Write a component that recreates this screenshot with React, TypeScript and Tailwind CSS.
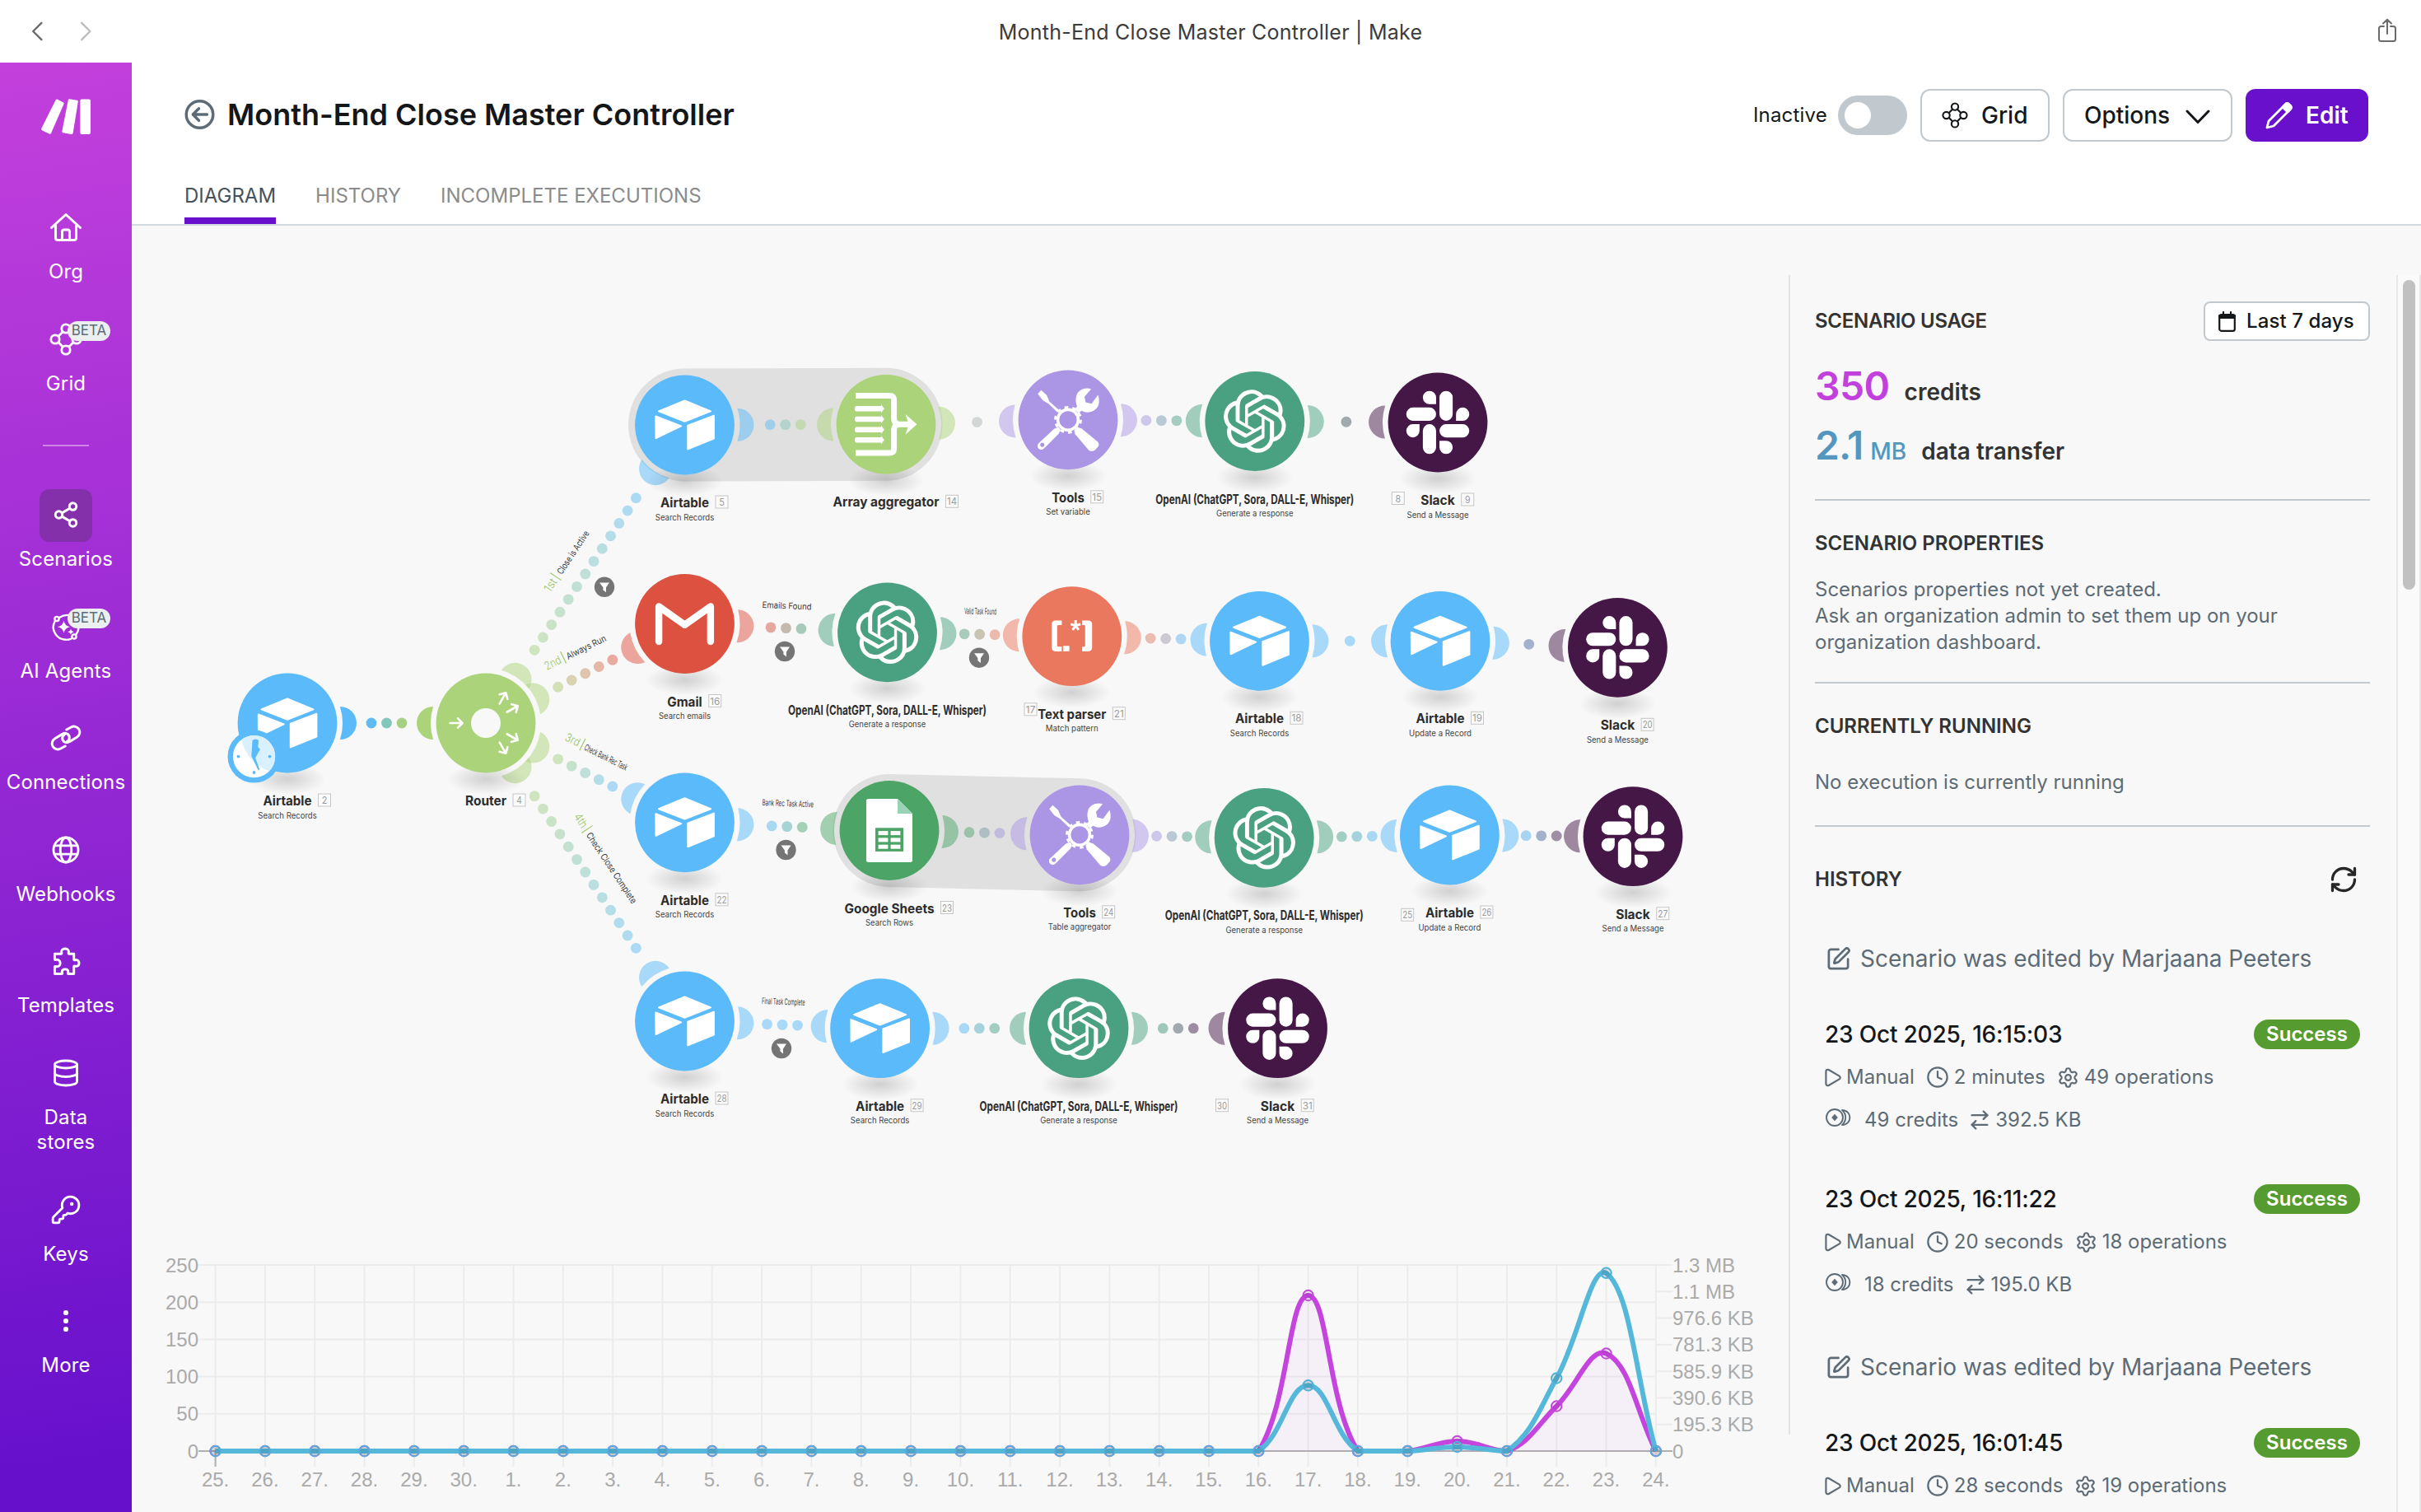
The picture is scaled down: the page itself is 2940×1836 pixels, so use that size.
import type { ReactNode } from "react";
import { ArrowRightLeft, Clock, Database, KeyRound, Play, RefreshCw, Settings, Share2, SquarePen } from "lucide-react";

/* ---------- Flow diagram ---------- */

type RGB = [number, number, number];
const BLUE: RGB = [90, 186, 250];
const GREEN: RGB = [171, 211, 122];
const RED: RGB = [221, 81, 64];
const TEAL: RGB = [74, 161, 129];
const CORAL: RGB = [234, 120, 94];
const VIOLET: RGB = [170, 150, 229];
const PLUM: RGB = [68, 23, 70];
const SHEET: RGB = [76, 165, 103];

const rgb = (c: RGB) => `rgb(${c[0]},${c[1]},${c[2]})`;
const mix = (a: RGB, b: RGB, t: number): RGB => [
  Math.round(a[0] + (b[0] - a[0]) * t),
  Math.round(a[1] + (b[1] - a[1]) * t),
  Math.round(a[2] + (b[2] - a[2]) * t),
];

const OPENAI =
  "M22.2819 9.8211a5.9847 5.9847 0 0 0-.5157-4.9108 6.0462 6.0462 0 0 0-6.5098-2.9A6.0651 6.0651 0 0 0 4.9807 4.1818a5.9847 5.9847 0 0 0-3.9977 2.9 6.0462 6.0462 0 0 0 .7427 7.0966 5.98 5.98 0 0 0 .511 4.9107 6.051 6.051 0 0 0 6.5146 2.9001A5.9847 5.9847 0 0 0 13.2599 24a6.0557 6.0557 0 0 0 5.7718-4.2058 5.9894 5.9894 0 0 0 3.9977-2.9001 6.0557 6.0557 0 0 0-.7475-7.0729zm-9.022 12.6081a4.4755 4.4755 0 0 1-2.8764-1.0408l.1419-.0804 4.7783-2.7582a.7948.7948 0 0 0 .3927-.6813v-6.7369l2.02 1.1686a.071.071 0 0 1 .038.052v5.5826a4.504 4.504 0 0 1-4.4945 4.4944zm-9.6607-4.1254a4.4708 4.4708 0 0 1-.5346-3.0137l.142.0852 4.783 2.7582a.7712.7712 0 0 0 .7806 0l5.8428-3.3685v2.3324a.0804.0804 0 0 1-.0332.0615L9.74 19.9502a4.4992 4.4992 0 0 1-6.1408-1.6464zM2.3408 7.8956a4.485 4.485 0 0 1 2.3655-1.9728V11.6a.7664.7664 0 0 0 .3879.6765l5.8144 3.3543-2.0201 1.1685a.0757.0757 0 0 1-.071 0l-4.8303-2.7865A4.504 4.504 0 0 1 2.3408 7.872zm16.5963 3.8558L13.1038 8.364 15.1192 7.2a.0757.0757 0 0 1 .071 0l4.8303 2.7913a4.4944 4.4944 0 0 1-.6765 8.1042v-5.6772a.79.79 0 0 0-.407-.667zm2.0107-3.0231l-.142-.0852-4.7735-2.7818a.7759.7759 0 0 0-.7854 0L9.409 9.2297V6.8974a.0662.0662 0 0 1 .0284-.0615l4.8303-2.7866a4.4992 4.4992 0 0 1 6.6802 4.66zM8.3065 12.863l-2.02-1.1638a.0804.0804 0 0 1-.038-.0567V6.0742a4.4992 4.4992 0 0 1 7.3757-3.4537l-.142.0805L8.704 5.459a.7948.7948 0 0 0-.3927.6813zm1.0976-2.3654l2.602-1.4998 2.6069 1.4998v2.9994l-2.5974 1.4997-2.6067-1.4997Z";
const SLACK =
  "M5.042 15.165a2.528 2.528 0 0 1-2.52 2.523A2.528 2.528 0 0 1 0 15.165a2.527 2.527 0 0 1 2.522-2.52h2.52v2.52zM6.313 15.165a2.527 2.527 0 0 1 2.521-2.52 2.527 2.527 0 0 1 2.521 2.52v6.313A2.528 2.528 0 0 1 8.834 24a2.528 2.528 0 0 1-2.521-2.522v-6.313zM8.834 5.042a2.528 2.528 0 0 1-2.521-2.52A2.528 2.528 0 0 1 8.834 0a2.528 2.528 0 0 1 2.521 2.522v2.52H8.834zM8.834 6.313a2.528 2.528 0 0 1 2.521 2.521 2.528 2.528 0 0 1-2.521 2.521H2.522A2.528 2.528 0 0 1 0 8.834a2.528 2.528 0 0 1 2.522-2.521h6.312zM18.956 8.834a2.528 2.528 0 0 1 2.522-2.521A2.528 2.528 0 0 1 24 8.834a2.528 2.528 0 0 1-2.522 2.521h-2.522V8.834zM17.688 8.834a2.528 2.528 0 0 1-2.523 2.521 2.527 2.527 0 0 1-2.52-2.521V2.522A2.527 2.527 0 0 1 15.165 0a2.528 2.528 0 0 1 2.523 2.522v6.312zM15.165 18.956a2.528 2.528 0 0 1 2.523 2.522A2.528 2.528 0 0 1 15.165 24a2.527 2.527 0 0 1-2.52-2.522v-2.522h2.52zM15.165 17.688a2.527 2.527 0 0 1-2.52-2.523 2.526 2.526 0 0 1 2.52-2.52h6.313A2.527 2.527 0 0 1 24 15.165a2.528 2.528 0 0 1-2.522 2.523h-6.313z";

function AirtableMark() {
  return (
    <path
      fill="#fff"
      stroke="#fff"
      strokeWidth="2"
      strokeLinejoin="round"
      d="M0 -29.5L31.5 -16.6L0 -4.2L-31.5 -16.6ZM35.4 -11.2V16.6L3.8 29.4V.8ZM-35.2 -10.6L-4.4 1.4L-35 16Z"
    />
  );
}

function GmailMark() {
  return (
    <path fill="none" stroke="#fff" strokeWidth="8.4" strokeLinecap="round" strokeLinejoin="round" d="M-31.4 21.5V-21L0 1.2L31.4 -21V21.5" />
  );
}

function ToolsMark() {
  return (
    <g fill="#fff" stroke="none">
      <path d="M-36.8 -31.5L-32.6 -36L-26 -30L-22.5 -22L-10.6 -11.5L-13 -9.2L-24 -19.8L-30.5 -23.5Z" />
      <path d="M8 -12.5L12.5 -8L16.4 -11C24 -7 34 -9.6 37 -18C38.4 -22.4 37.6 -27 36.4 -30.2L28.6 -19.6L21.4 -21.4L20 -28L28 -37.2C22 -40 12.6 -37 10.2 -29.4C8.8 -24.6 9.4 -20 11 -16.6Z" />
      <path fillRule="evenodd" d="M-11.5 8.6L-17 11L-35.6 28.4C-37.8 30.6 -37.4 33.6 -35.4 35.2C-33.4 36.8 -30.6 36.4 -28.8 34.4L-11.2 16.6L-9 12ZM-31.2 27.8A2.6 2.6 0 1 1 -31.3 27.8Z" />
      <path d="M7.4 12.6L8.6 17.4L24.8 36.4C27 38.8 30.6 38.6 33 36.4L36.2 33C38 31 37.8 28.4 35.8 26.4L16.4 10.4L11.4 9.2Z" />
      <circle r="12.4" fill="none" stroke="#fff" strokeWidth="3.6" />
      <circle r="15.4" fill="none" stroke="#fff" strokeWidth="3" strokeDasharray="4.6 5.08" />
    </g>
  );
}

function AggregatorMark() {
  return (
    <g fill="#fff">
      <path
        fill="none"
        stroke="#fff"
        strokeWidth="7"
        d="M-37 -34.8H4C8 -34.8 9.6 -33 9.6 -29.5V-8C9.6 -2 12 0 17 0H29M-37 34.8H4C8 34.8 9.6 33 9.6 29.5V8C9.6 2 12 0 17 0"
      />
      <path d="M23.6 -12.4L37.4 0L23.6 12.4L27.6 0Z" />
      {[-19, -6.3, 6.4, 19].map((y) => (
        <path key={y} d={`M-36.6 ${y - 3.3}H-6V${y - 5}L-2 ${y}L-6 ${y + 5}V${y + 3.3}H-36.6L-38 ${y + 1.5}V${y - 1.5}Z`} />
      ))}
    </g>
  );
}

function ParserMark() {
  return (
    <g fill="#fff">
      <path d="M-12.4 -19.3V-13.8H-16.6Q-18 -13.8 -18 -12.4V11.2Q-18 12.6 -16.6 12.6H-12.4V18.2H-20Q-24.6 18.2 -24.6 13.6V-14.8Q-24.6 -19.3 -20 -19.3Z" />
      <path d="M12.4 -19.3V-13.8H14.6Q16 -13.8 16 -12.4V11.2Q16 12.6 14.6 12.6H12.4V18.2H19.6Q24.4 18.2 24.4 13.6V-14.8Q24.4 -19.3 19.6 -19.3Z" />
      <rect x="-10.8" y="11.6" width="7.6" height="6.6" />
      <path stroke="#fff" strokeWidth="3" d="M4.4 -13V-19.6M4.4 -13L-1.6 -14.8M4.4 -13L10.4 -14.8M4.4 -13L.8 -7.8M4.4 -13L8 -7.8" />
    </g>
  );
}

function SheetsMark() {
  return (
    <g>
      <path fill="#fff" d="M-25.5 -38.5H10L28 -20.5V36Q28 38.5 25.5 38.5H-25.5Q-28 38.5 -28 36V-36Q-28 -38.5 -25.5 -38.5Z" />
      <path fill="#98d3b5" d="M10 -38.5L28 -20.5H10Z" />
      <rect x="-17" y="-3.2" width="34" height="28.6" fill="#4ca567" />
      {[0.6, 8.9, 17.2].map((y) => (
        <g key={y} fill="#fff">
          <rect x="-13.4" y={y} width="11.8" height="5" />
          <rect x="1.6" y={y} width="11.8" height="5" />
        </g>
      ))}
    </g>
  );
}

function RouterMark() {
  const arrows: [number, number, number][] = [
    [-36, 0, 0],
    [20.5, -30.2, -60],
    [32.2, -17, -30],
    [32.2, 17, 30],
    [20.5, 30.2, 60],
  ];
  return (
    <g>
      <circle r="18" fill="#f8f8f8" />
      {arrows.map(([x, y, a]) => (
        <path
          key={`${x}${y}`}
          transform={`translate(${x} ${y}) rotate(${a})`}
          fill="none"
          stroke="#fff"
          strokeWidth="2.6"
          strokeLinecap="round"
          strokeLinejoin="round"
          d="M-7.5 0H7.5M2 -5.6L7.6 0L2 5.6"
        />
      ))}
    </g>
  );
}

const logo = (d: string, size: number) => (
  <path fill="#fff" transform={`scale(${size / 24}) translate(-12 -12)`} d={d} />
);

type Kind = "airtable" | "router" | "array" | "tools" | "openai" | "slack" | "gmail" | "parser" | "sheets";

const KINDS: Record<Kind, { color: RGB; name: string; width: number; mark: ReactNode }> = {
  airtable: { color: BLUE, name: "Airtable", width: 59, mark: <AirtableMark /> },
  router: { color: GREEN, name: "Router", width: 50, mark: <RouterMark /> },
  array: { color: GREEN, name: "Array aggregator", width: 129, mark: <AggregatorMark /> },
  tools: { color: VIOLET, name: "Tools", width: 39.5, mark: <ToolsMark /> },
  openai: { color: TEAL, name: "OpenAI (ChatGPT, Sora, DALL-E, Whisper)", width: 241, mark: logo(OPENAI, 76.5) },
  slack: { color: PLUM, name: "Slack", width: 41.5, mark: logo(SLACK, 76.5) },
  gmail: { color: RED, name: "Gmail", width: 42.5, mark: <GmailMark /> },
  parser: { color: CORAL, name: "Text parser", width: 83, mark: <ParserMark /> },
  sheets: { color: SHEET, name: "Google Sheets", width: 109, mark: <SheetsMark /> },
};

type FlowNode = { id: number; kind: Kind; x: number; y: number; sub?: string; subWidth?: number };

const NODES: FlowNode[] = [
  { id: 2, kind: "airtable", x: 349, y: 878, sub: "Search Records", subWidth: 71.5 },
  { id: 4, kind: "router", x: 590, y: 878 },
  { id: 5, kind: "airtable", x: 831.5, y: 516, sub: "Search Records", subWidth: 71.5 },
  { id: 14, kind: "array", x: 1076, y: 515.3 },
  { id: 15, kind: "tools", x: 1297, y: 509.8, sub: "Set variable", subWidth: 53.5 },
  { id: 8, kind: "openai", x: 1523.8, y: 511.5, sub: "Generate a response", subWidth: 93.5 },
  { id: 9, kind: "slack", x: 1746, y: 513, sub: "Send a Message", subWidth: 75 },
  { id: 16, kind: "gmail", x: 831.5, y: 757.5, sub: "Search emails", subWidth: 63 },
  { id: 17, kind: "openai", x: 1077.5, y: 767.8, sub: "Generate a response", subWidth: 93.5 },
  { id: 21, kind: "parser", x: 1301.8, y: 772.7, sub: "Match pattern", subWidth: 64 },
  { id: 18, kind: "airtable", x: 1529.5, y: 778.3, sub: "Search Records", subWidth: 71.5 },
  { id: 19, kind: "airtable", x: 1749, y: 778.3, sub: "Update a Record", subWidth: 76 },
  { id: 20, kind: "slack", x: 1964.4, y: 786.3, sub: "Send a Message", subWidth: 75 },
  { id: 22, kind: "airtable", x: 831.5, y: 998.8, sub: "Search Records", subWidth: 71.5 },
  { id: 23, kind: "sheets", x: 1080, y: 1008.5, sub: "Search Rows", subWidth: 58 },
  { id: 24, kind: "tools", x: 1311, y: 1013.8, sub: "Table aggregator", subWidth: 76.5 },
  { id: 25, kind: "openai", x: 1535.2, y: 1017.3, sub: "Generate a response", subWidth: 93.5 },
  { id: 26, kind: "airtable", x: 1760.4, y: 1014, sub: "Update a Record", subWidth: 76 },
  { id: 27, kind: "slack", x: 1983, y: 1015.7, sub: "Send a Message", subWidth: 75 },
  { id: 28, kind: "airtable", x: 831.5, y: 1240, sub: "Search Records", subWidth: 71.5 },
  { id: 29, kind: "airtable", x: 1068.6, y: 1248.7, sub: "Search Records", subWidth: 71.5 },
  { id: 30, kind: "openai", x: 1310, y: 1248.7, sub: "Generate a response", subWidth: 93.5 },
  { id: 31, kind: "slack", x: 1551.5, y: 1248.7, sub: "Send a Message", subWidth: 75 },
];

/* [from, to, number of dots] */
const LINKS: [number, number, number][] = [
  [2, 4, 3], [4, 5, 13], [4, 16, 5], [4, 22, 5], [4, 28, 13],
  [5, 14, 3], [14, 15, 1], [15, 8, 3], [8, 9, 1],
  [16, 17, 3], [17, 21, 3], [21, 18, 3], [18, 19, 1], [19, 20, 1],
  [22, 23, 3], [23, 24, 3], [24, 25, 3], [25, 26, 3], [26, 27, 3],
  [28, 29, 3], [29, 30, 3], [30, 31, 3],
];

const EAR = "M63.95 -20A20 20 0 1 1 63.95 20A67 67 0 0 0 63.95 -20Z";
const DOT_GAP = 18.5;
const byId = (id: number) => NODES.find((n) => n.id === id)!;

function Link({ from, to, dots }: { from: number; to: number; dots: number }) {
  const a = byId(from);
  const b = byId(to);
  const ca = KINDS[a.kind].color;
  const cb = KINDS[b.kind].color;
  const dx = b.x - a.x;
  const dy = b.y - a.y;
  const len = Math.hypot(dx, dy);
  const angle = (Math.atan2(dy, dx) * 180) / Math.PI;
  const alpha = from === 2 ? 1 : 0.5;
  return (
    <g>
      <path d={EAR} fill={rgb(ca)} fillOpacity={alpha} transform={`translate(${a.x} ${a.y}) rotate(${angle})`} />
      <path d={EAR} fill={rgb(cb)} fillOpacity={alpha} transform={`translate(${b.x} ${b.y}) rotate(${angle + 180})`} />
      {Array.from({ length: dots }, (_, i) => {
        const off = (i - (dots - 1) / 2) * DOT_GAP;
        const t = dots === 1 ? 0.5 : 0.08 + (0.84 * i) / (dots - 1);
        return (
          <circle
            key={i}
            cx={(a.x + b.x) / 2 + (dx / len) * off}
            cy={(a.y + b.y) / 2 + (dy / len) * off}
            r="6.4"
            fill={rgb(mix(ca, cb, t))}
            fillOpacity={alpha}
          />
        );
      })}
    </g>
  );
}

function NodeView({ n }: { n: FlowNode }) {
  const k = KINDS[n.kind];
  const badgeX = n.kind === "openai" ? 166 : k.width / 2 + 7.5;
  return (
    <g transform={`translate(${n.x} ${n.y})`}>
      <ellipse cy="68" rx="47" ry="19" fill="url(#shade)" />
      <circle r="60.4" fill={rgb(k.color)} />
      {k.mark}
      <text
        x={-k.width / 2}
        y="100"
        textLength={k.width}
        lengthAdjust="spacingAndGlyphs"
        className="fill-[#2d2d2d] text-[16px] font-bold"
      >
        {k.name}
      </text>
      <rect x={badgeX + 0.5} y="86" width="15" height="15" fill="#fbfbfb" stroke="#c6c6c6" />
      <text
        x={badgeX + (n.id > 9 ? 2 : 4.7)}
        y="98"
        textLength={n.id > 9 ? 12 : 6.6}
        lengthAdjust="spacingAndGlyphs"
        className="fill-[#9c9c9c] text-[12px]"
      >
        {n.id}
      </text>
      {n.sub && (
        <text
          x={-(n.subWidth ?? 0) / 2}
          y="115.7"
          textLength={n.subWidth}
          lengthAdjust="spacingAndGlyphs"
          className="fill-[#444] text-[10px]"
        >
          {n.sub}
        </text>
      )}
    </g>
  );
}

const ROUTES = [
  { x: 667.8, y: 720, a: -56.3, ord: "1st", bar: 20.5, at: 26, name: "Close is Active", w: 61 },
  { x: 664, y: 814, a: -26.5, ord: "2nd", bar: 25, at: 29, name: "Always Run", w: 52.5 },
  { x: 685, y: 898.5, a: 26.5, ord: "3rd", bar: 22.5, at: 26.5, name: "Check Bank Rec Task", w: 57 },
  { x: 696.5, y: 991.5, a: 56.3, ord: "4th", bar: 22, at: 27, name: "Check Close Complete", w: 101 },
];

const LINK_LABELS = [
  { x: 925.5, y: 738, a: 2.4, name: "Emails Found", w: 60 },
  { x: 1171, y: 745.5, a: 1.3, name: "Valid Task Found", w: 39 },
  { x: 925.5, y: 978, a: 2.2, name: "Bank Rec Task Active", w: 62.5 },
  { x: 925, y: 1219, a: 2.1, name: "Final Task Complete", w: 52.5 },
];

const FILTERS: [number, number][] = [
  [734, 712.8],
  [953, 791],
  [1189, 798.7],
  [954.5, 1032],
  [949, 1273],
];

function ScheduleClock() {
  return (
    <g transform="translate(308.5 918.6)">
      <circle r="32" fill="#5abafa" />
      <circle r="25.6" fill="#fff" />
      <path fill="#d9f1fe" d="M0 0L-15.5 -20.4A25.6 25.6 0 0 1 18.6 17.6Q-8 8 -15.5 -20.4Z" />
      <g fill="#5abafa">
        <circle cx="-19" r="1.9" />
        <circle cx="19" r="1.9" />
        <circle cy="19.4" r="1.9" />
        <path d="M-2 -19.5Q2 -22.5 5.6 -19.5L4.8 -11.5L7.4 -8.5L1.6 1.6L6.8 16L5 16.6L-1.4 3L-3.2 0Z" />
      </g>
    </g>
  );
}

function Diagram() {
  return (
    <svg className="block h-[1206px] w-[2012px] font-[Inter,sans-serif]" viewBox="160 274 2012 1206">
      <defs>
        <radialGradient id="shade">
          <stop offset="0" stopColor="#000" stopOpacity="0.16" />
          <stop offset="0.5" stopColor="#000" stopOpacity="0.08" />
          <stop offset="1" stopColor="#000" stopOpacity="0" />
        </radialGradient>
      </defs>
      <path d="M831.5 516L1076 515.3M1080 1008.5L1311 1013.8" stroke="#e0e0e0" strokeWidth="137" strokeLinecap="round" />
      {LINKS.map(([f, t, d]) => (
        <Link key={`${f}-${t}`} from={f} to={t} dots={d} />
      ))}
      {NODES.map((n) => (
        <NodeView key={n.id} n={n} />
      ))}
      <ScheduleClock />
      {ROUTES.map((r) => (
        <g key={r.ord} transform={`translate(${r.x} ${r.y}) rotate(${r.a})`}>
          <text className="fill-[#9cc566] text-[14px] font-light" textLength={r.bar - 4} lengthAdjust="spacingAndGlyphs">
            {r.ord}
          </text>
          <path d={`M${r.bar} -13V3`} stroke="#9cc566" strokeWidth="1.1" />
          <text x={r.at} textLength={r.w} lengthAdjust="spacingAndGlyphs" className="fill-[#3c3c3c] text-[11px]">
            {r.name}
          </text>
        </g>
      ))}
      {LINK_LABELS.map((l) => (
        <text
          key={l.name}
          transform={`translate(${l.x} ${l.y}) rotate(${l.a})`}
          textLength={l.w}
          lengthAdjust="spacingAndGlyphs"
          className="fill-[#3c3c3c] text-[10.5px]"
        >
          {l.name}
        </text>
      ))}
      {FILTERS.map(([x, y]) => (
        <g key={`${x}`} transform={`translate(${x} ${y})`}>
          <circle r="12.2" fill="#757575" />
          <path fill="#fff" d="M-6 -5.4H6L2 .4V6.4L-1.6 3.6V.4Z" />
        </g>
      ))}
    </svg>
  );
}

/* ---------- Usage chart ---------- */

const DAYS = ["25.", "26.", "27.", "28.", "29.", "30.", ...Array.from({ length: 24 }, (_, i) => `${i + 1}.`)];
const X0 = 261.6;
const STEP = 60.32;
const TOP = 1536;
const BASE = 1762;
const ZERO = Array.from({ length: 30 }, () => BASE);
const at = (edits: Record<number, number>) => ZERO.map((v, i) => edits[i] ?? v);
const CREDITS = at({ 22: 1573, 25: 1750, 27: 1707.5, 28: 1643.5 });
const TRANSFER = at({ 22: 1682.3, 25: 1757, 27: 1673.5, 28: 1545.8 });

/* Cubic spline whose control points are kept inside the plot area. */
function spline(ys: number[]) {
  const pts = ys.map((y, i) => ({ x: X0 + i * STEP, y }));
  const clamp = (y: number) => Math.min(BASE, Math.max(TOP, y));
  const ctrl = pts.map((p, i) => {
    const a = pts[Math.max(0, i - 1)];
    const b = pts[Math.min(pts.length - 1, i + 1)];
    const d0 = Math.hypot(p.x - a.x, p.y - a.y);
    const d1 = Math.hypot(b.x - p.x, b.y - p.y);
    const f0 = (0.4 * d0) / (d0 + d1);
    const f1 = (0.4 * d1) / (d0 + d1);
    return {
      px: p.x - f0 * (b.x - a.x),
      py: clamp(p.y - f0 * (b.y - a.y)),
      nx: p.x + f1 * (b.x - a.x),
      ny: clamp(p.y + f1 * (b.y - a.y)),
    };
  });
  return pts
    .map((p, i) =>
      i === 0 ? `M${p.x} ${p.y}` : `C${ctrl[i - 1].nx} ${ctrl[i - 1].ny} ${ctrl[i].px} ${ctrl[i].py} ${p.x} ${p.y}`,
    )
    .join("");
}

function Chart() {
  const end = X0 + 29 * STEP;
  const left = ["250", "200", "150", "100", "50", "0"];
  const right = ["1.3 MB", "1.1 MB", "976.6 KB", "781.3 KB", "585.9 KB", "390.6 KB", "195.3 KB", "0"];
  return (
    <svg className="block h-[356px] w-[2012px] font-['Liberation_Sans',Arial,sans-serif] text-[24px]" viewBox="160 1480 2012 356">
      <g stroke="#ececec" strokeWidth="2">
        {left.map((l, i) => (
          <path key={l} d={`M241 ${TOP + i * 45.2}H${end}`} />
        ))}
        {right.map((l, i) => (
          <path key={l} d={`M${end} ${TOP + i * 32.28}H2031`} />
        ))}
        {DAYS.map((d, i) => (
          <path key={d + i} d={`M${X0 + i * STEP} ${TOP}V1781`} />
        ))}
      </g>
      <path d={`M241 ${BASE}H2031M${X0} ${BASE}V1781`} stroke="#b0b0b0" strokeWidth="2" />
      <g className="fill-[#aaaaaa]">
        {left.map((l, i) => (
          <text key={l} x="241" y={TOP + i * 45.2 + 8.6} textAnchor="end">
            {l}
          </text>
        ))}
        {right.map((l, i) => (
          <text key={l} x="2031" y={TOP + i * 32.28 + 8.6}>
            {l}
          </text>
        ))}
        {DAYS.map((d, i) => (
          <text key={d + i} x={X0 + i * STEP} y="1805" textAnchor="middle">
            {d}
          </text>
        ))}
      </g>
      <path d={`${spline(CREDITS)}L${end} ${BASE}H${X0}Z`} fill="#c444dd" fillOpacity="0.045" />
      <path d={spline(CREDITS)} fill="none" stroke="#c444dd" strokeWidth="6" />
      {CREDITS.map((y, i) => (
        <circle key={i} cx={X0 + i * STEP} cy={y} r="6.2" fill="#000" fillOpacity="0.05" stroke="#c444dd" strokeWidth="2" />
      ))}
      <path d={spline(TRANSFER)} fill="none" stroke="#55b8db" strokeWidth="6" />
      {TRANSFER.map((y, i) => (
        <circle
          key={i}
          cx={X0 + i * STEP}
          cy={y}
          r="6.2"
          fill="#000"
          fillOpacity="0.1"
          stroke={y === BASE ? "#5aaade" : "#4fb3d8"}
          strokeWidth="2"
        />
      ))}
    </svg>
  );
}

/* ---------- Icons ---------- */

const line = { fill: "none", stroke: "currentColor", strokeLinecap: "round", strokeLinejoin: "round" } as const;

function GridIcon({ className, sw }: { className: string; sw: number }) {
  return (
    <svg className={className} viewBox="0 0 40 40" {...line} strokeWidth={sw}>
      <circle cx="20" cy="7" r="5.2" />
      <circle cx="7" cy="20" r="5.2" />
      <circle cx="33" cy="20" r="5.2" />
      <circle cx="20" cy="33" r="5.2" />
      <path d="M16.2 11L11 16.2M23.8 11L29 16.2M11 23.8L16.2 29M29 23.8L23.8 29" />
    </svg>
  );
}

const HomeIcon = (
  <svg className="h-[36px] w-[40px]" viewBox="0 0 40 36" {...line} strokeWidth="3">
    <path d="M2.5 18.5L20 2.5L37.5 18.5M7.5 15V31Q7.5 33.5 10 33.5H30Q32.5 33.5 32.5 31V15M15.5 33V23.5Q15.5 21 18 21H22Q24.5 21 24.5 23.5V33" />
  </svg>
);
const AgentIcon = (
  <svg className="size-[36px]" viewBox="0 0 36 36" {...line} strokeWidth="2.4">
    <circle cx="7" cy="8.5" r="2.6" />
    <circle cx="28" cy="30" r="2.6" />
    <path d="M4.6 11.5C-1 22 7 33.5 17.5 33.8Q21 34 24 32.8M10 7C20 .5 30 5 33 14M33.4 20Q33 24 30.6 27" />
    <path fill="currentColor" stroke="none" d="M15.5 10.5Q16.5 17 23 18.3Q16.5 19.5 15.5 26Q14.5 19.5 8 18.3Q14.5 17 15.5 10.5ZM24 20.5Q24.6 23.6 28 24.2Q24.6 24.8 24 28Q23.4 24.8 20 24.2Q23.4 23.6 24 20.5Z" />
  </svg>
);
const LinkIcon = (
  <svg className="h-[32px] w-[40px]" viewBox="0 0 40 32" {...line} strokeWidth="3">
    <path d="M24.2 13.2C22 10.6 17.6 10 14.6 12.6L17 10.4M14.8 12.4L6.4 17.4A7.2 7.2 0 0 0 13.6 29.8L20.6 25.6" stroke="none" />
    <path d="M18.6 11.6C14.8 13.6 14.8 19 18.4 21C20.4 22 22.6 21.8 24.4 20.6L33.6 15A7 7 0 0 0 26.4 3L20.8 6" />
    <path d="M21.4 20.4C25.2 18.4 25.2 13 21.6 11C19.6 10 17.4 10.2 15.6 11.4L6.4 17A7 7 0 0 0 13.6 29L19.2 26" />
  </svg>
);
const GlobeIcon = (
  <svg className="size-[34px]" viewBox="0 0 34 34" {...line} strokeWidth="2.8">
    <circle cx="17" cy="17" r="15" />
    <ellipse cx="17" cy="17" rx="6.8" ry="15" />
    <path d="M3 11.8H31M3 22.2H31" />
  </svg>
);
const PuzzleIcon = (
  <svg className="size-[35px]" viewBox="0 0 36 36" {...line} strokeWidth="3">
    <path d="M3.5 8.5H11.5C13 8.5 12 6.8 12 5.6C12 3.2 14.2 2 16.5 2S21 3.2 21 5.6C21 6.8 20 8.5 21.5 8.5H27.5V15.5C27.5 17 29 16 30.2 16C32.6 16 34 17.8 34 20S32.6 24 30.2 24C29 24 27.5 23 27.5 24.5V33.5H20.5C19.4 33.5 20.4 32 20.4 30.8C20.4 28.6 18.6 27.6 16.5 27.6S12.6 28.6 12.6 30.8C12.6 32 13.6 33.5 12.5 33.5H3.5V24.8C3.5 23.4 5 24.4 6.2 24.4C8.8 24.4 10.4 22.4 10.4 20S8.8 15.6 6.2 15.6C5 15.6 3.5 16.6 3.5 15.2Z" />
  </svg>
);
const MoreIcon = (
  <svg className="h-[28px] w-[8px]" viewBox="0 0 8 28" fill="currentColor">
    <circle cx="4" cy="4" r="3.1" />
    <circle cx="4" cy="14" r="3.1" />
    <circle cx="4" cy="24" r="3.1" />
  </svg>
);

function CoinsIcon() {
  return (
    <svg className="mb-[6px] h-[24px] w-[32px]" viewBox="0 0 32 24" {...line} strokeWidth="1.9">
      <circle cx="12" cy="12" r="10" />
      <path d="M12 7.8L15.8 12L12 16.2L8.2 12Z" fill="currentColor" stroke="none" />
      <path d="M21 3C33.5 3.4 33.5 20.6 21 21C26.6 16 26.6 8 21 3Z" />
    </svg>
  );
}

/* ---------- Shell ---------- */

function NavItem({ icon, label, active, beta }: { icon: ReactNode; label: string; active?: boolean; beta?: boolean }) {
  return (
    <div className="flex w-full flex-col items-center gap-[6px]">
      <div className={`relative flex size-16 items-center justify-center rounded-xl pb-[2px] ${active ? "bg-[#8430ab]" : ""}`}>
        {icon}
        {beta && (
          <span className="absolute left-[34px] top-[9px] flex h-[24px] w-[52px] items-center justify-center rounded-full bg-[#ebefef] text-[17px] text-[#5d6b77]">
            BETA
          </span>
        )}
      </div>
      <span className="whitespace-pre text-center text-[24px] leading-[30px] tracking-[0.15px]">{label}</span>
    </div>
  );
}

function Sidebar() {
  return (
    <aside className="flex h-full w-[160px] shrink-0 flex-col items-center bg-linear-[172deg,#6610cc_3%,#c340dc_100%] bg-linear-[172deg,#c340dc_0%,#6610cc_97%] text-white">
      <svg className="mt-[44px] h-[44px] w-[62px]" viewBox="0 0 62 44" fill="#fff">
        <path d="M18.6 1.6Q19.4 0 21 .8L28 4.4Q29 5 28.4 6.4L13.2 41.6Q12.4 43.4 10.8 42.6L2 38.2Q.6 37.4 1.4 35.8ZM33.8 1.4Q34 0 35.4 .2L44.6 1.8Q46 2 45.8 3.6L39.6 41.8Q39.2 43.4 37.6 43.1L27.6 41.2Q26 40.8 26.4 39.2ZM50 .6H59Q61 .6 61 2.6V41Q61 43 59 43H50Q48.4 43 48.4 41V2.6Q48.4 .6 50 .6Z" />
      </svg>
      <nav className="mt-[81px] flex w-full flex-col items-center gap-[36px]">
        <NavItem icon={HomeIcon} label="Org" />
        <NavItem icon={<GridIcon className="size-[40px]" sw={2.8} />} label="Grid" beta />
      </nav>
      <div className="mt-[59px] h-[2px] w-[56px] bg-[#cf86e6]" />
      <nav className="mt-[52px] flex w-full flex-col items-center gap-[35.6px]">
        <NavItem icon={<Share2 className="size-[34px]" strokeWidth={2.1} />} label="Scenarios" active />
        <NavItem icon={AgentIcon} label="AI Agents" beta />
        <NavItem icon={LinkIcon} label="Connections" />
        <NavItem icon={GlobeIcon} label="Webhooks" />
        <NavItem icon={PuzzleIcon} label="Templates" />
        <NavItem icon={<Database className="size-[36px]" strokeWidth={1.9} />} label={"Data\nstores"} />
        <NavItem icon={<KeyRound className="size-[38px]" strokeWidth={1.8} />} label="Keys" />
        <NavItem icon={MoreIcon} label="More" />
      </nav>
    </aside>
  );
}

function TitleBar() {
  return (
    <div className="flex h-[76px] shrink-0 items-center bg-white pl-[38px] pr-[29px]">
      <svg className="h-[24px] w-[74px]" viewBox="0 0 74 24" fill="none" strokeWidth="2.4" strokeLinecap="round" strokeLinejoin="round">
        <path d="M12.4 1.8L2.2 12L12.4 22.2" stroke="#6a6a6a" />
        <path d="M61.2 1.8L71.4 12L61.2 22.2" stroke="#bdbdbd" />
      </svg>
      <div className="flex-1 pr-[59px] pt-[3px] text-center text-[25px] tracking-[0.24px] text-[#3c3c3c]">
        Month-End Close Master Controller | Make
      </div>
      <svg className="-mt-[3px] h-[30px] w-[24px] text-[#6b6b6b]" viewBox="0 0 24 30" {...line} strokeWidth="2">
        <path d="M8 10H4.5Q2 10 2 12.5V25.5Q2 28 4.5 28H19.5Q22 28 22 25.5V12.5Q22 10 19.5 10H16M12 19V2M7 6.5L12 1.8L17 6.5" />
      </svg>
    </div>
  );
}

function Header() {
  return (
    <header className="flex h-[198px] shrink-0 flex-col border-b-2 border-[#d3d9de] bg-white pl-16 pr-16">
      <div className="mt-8 flex h-16 items-center">
        <svg className="size-[38px] text-[#5d6b77]" viewBox="0 0 38 38" {...line} strokeWidth="3.4">
          <circle cx="18.5" cy="18" r="16.3" />
          <path d="M27.5 18H10.5M17.5 10.8L10.3 18L17.5 25.2" />
        </svg>
        <h1 className="-mt-[2px] ml-[14px] text-[36px] font-semibold text-[#14171a]">Month-End Close Master Controller</h1>
        <div className="ml-auto flex items-center text-[#14171a]">
          <span className="text-[24px] tracking-[0.2px]">Inactive</span>
          <span className="ml-[13px] flex h-12 w-[84px] items-center rounded-full bg-[#c1c8ce] pl-2">
            <span className="size-8 rounded-full bg-white" />
          </span>
          <button className="ml-4 flex h-16 w-[157px] items-center rounded-xl border-2 border-[#c1c8ce] pl-6 text-[28px] font-medium">
            <GridIcon className="size-[32px]" sw={2.6} />
            <span className="ml-4">Grid</span>
          </button>
          <button className="ml-4 flex h-16 w-[206px] items-center rounded-xl border-2 border-[#c1c8ce] pl-6 text-[28px] font-medium">
            <span>Options</span>
            <svg className="ml-[19px] mt-[3px] h-[18px] w-[30px]" viewBox="0 0 30 18" {...line} strokeWidth="3">
              <path d="M2 2L15 15.5L28 2" />
            </svg>
          </button>
          <button className="ml-4 flex h-16 w-[149px] items-center rounded-xl bg-[#6810cc] pl-6 text-[28px] font-semibold text-white">
            <svg className="size-[34px]" viewBox="0 0 34 34" {...line} strokeWidth="2.8">
              <path d="M2 32L4 24L24.5 3.5Q26.5 1.5 28.5 3.5L30.5 5.5Q32.5 7.5 30.5 9.5L10 30Z" />
              <path fill="currentColor" d="M21 7L24.5 3.5Q26.5 1.5 28.5 3.5L30.5 5.5Q32.5 7.5 30.5 9.5L27 13Z" />
            </svg>
            <span className="ml-[15px]">Edit</span>
          </button>
        </div>
      </div>
      <div className="mt-auto flex gap-12 text-[24px] leading-[32px] text-[#8b8b8b]">
        <span className="flex h-[50px] items-start border-b-8 border-[#6810cc] text-[#46525c]">DIAGRAM</span>
        <span>HISTORY</span>
        <span>INCOMPLETE EXECUTIONS</span>
      </div>
    </header>
  );
}

function EditedRow({ className }: { className: string }) {
  return (
    <div className={`flex h-10 items-center pl-[13px] text-[28px] text-[#5d6b77] ${className}`}>
      <SquarePen className="size-[31px]" strokeWidth={2.1} />
      <span className="ml-[11px] whitespace-nowrap">Scenario was edited by Marjaana Peeters</span>
    </div>
  );
}

function Run({ className, date, time, ops, credits, size }: {
  className: string;
  date: string;
  time: string;
  ops: string;
  credits?: string;
  size?: string;
}) {
  return (
    <div className={`pl-3 pr-3 text-[24px] text-[#5d6b77] ${className}`}>
      <div className="flex h-10 items-center justify-between">
        <span className="text-[28px] font-medium tracking-[-0.2px] text-[#14171a]">{date}</span>
        <span className="flex h-9 w-[129px] items-center justify-center rounded-full bg-[#569b30] font-semibold text-white">Success</span>
      </div>
      <div className="mt-4 flex h-8 items-center whitespace-nowrap">
        <Play className="-ml-[4px] h-[27px] w-[26px]" strokeWidth={2} />
        <span className="ml-[4px]">Manual</span>
        <Clock className="ml-[14px] size-[28px]" strokeWidth={1.9} />
        <span className="ml-[6px]">{time}</span>
        <Settings className="ml-[14px] size-[27px]" strokeWidth={1.9} />
        <span className="ml-[6px]">{ops}</span>
      </div>
      {credits && (
        <div className="mt-5 flex h-8 items-center whitespace-nowrap">
          <CoinsIcon />
          <span className="ml-4">{credits}</span>
          <ArrowRightLeft className="ml-[12px] size-[28px]" strokeWidth={2} />
          <span className="ml-[5px]">{size}</span>
        </div>
      )}
    </div>
  );
}

function SidePanel() {
  const rule = "h-[2px] bg-[#c1c8ce]";
  const head = "flex h-8 items-center text-[24px] font-semibold text-[#333]";
  return (
    <section className="ml-[30px] flex h-full w-[674px] flex-col overflow-hidden pt-[92px]">
      <div className="flex h-12 shrink-0 items-center justify-between">
        <h2 className="text-[24px] font-semibold tracking-[-0.25px] text-[#333]">SCENARIO USAGE</h2>
        <button className="flex h-12 w-[202px] items-center rounded-lg border-2 border-[#c1c8ce] bg-white pl-4 text-[24px] font-medium tracking-[0.1px] text-[#14171a]">
          <svg className="h-[25px] w-[21px]" viewBox="0 0 21 25" {...line} strokeWidth="2.2">
            <rect x="1.2" y="4" width="18.6" height="19.8" rx="2.4" />
            <path d="M6 1V5M15 1V5" />
            <path d="M1.2 5H19.8V8H1.2Z" fill="currentColor" />
          </svg>
          <span className="ml-[13px]">Last 7 days</span>
        </button>
      </div>
      <p className="mt-[19px] h-[72px] shrink-0 text-[48px] font-semibold leading-[72px] tracking-[-0.6px] text-[#c240dc]">
        350<span className="ml-[18px] text-[28px] leading-none tracking-normal text-[#333]">credits</span>
      </p>
      <p className="h-[72px] shrink-0 text-[48px] font-semibold leading-[72px] tracking-[-1px] text-[#5596bf]">
        2.1<span className="ml-[9px] text-[28px] font-medium leading-none tracking-normal">MB</span>
        <span className="ml-[18px] text-[28px] leading-none tracking-normal text-[#333]">data transfer</span>
      </p>
      <div className={`mt-[29px] shrink-0 ${rule}`} />
      <h2 className={`mt-9 shrink-0 ${head}`}>SCENARIO PROPERTIES</h2>
      <p className="mt-6 h-24 shrink-0 text-[24px] leading-8 text-[#5d6b77]">
        Scenarios properties not yet created.
        <br />
        Ask an organization admin to set them up on your
        <br />
        organization dashboard.
      </p>
      <div className={`mt-8 shrink-0 ${rule}`} />
      <h2 className={`mt-9 shrink-0 ${head}`}>CURRENTLY RUNNING</h2>
      <p className="mt-9 h-8 shrink-0 text-[24px] leading-8 text-[#5d6b77]">No execution is currently running</p>
      <div className={`mt-9 shrink-0 ${rule}`} />
      <div className="mt-[46px] flex shrink-0 items-center justify-between pr-[14px]">
        <h2 className={head}>HISTORY</h2>
        <RefreshCw className="size-[36px] text-[#262626]" strokeWidth={2.2} />
      </div>
      <EditedRow className="mt-[58px] shrink-0" />
      <Run className="mt-[52px] shrink-0" date="23 Oct 2025, 16:15:03" time="2 minutes" ops="49 operations" credits="49 credits" size="392.5 KB" />
      <Run className="mt-[60px] shrink-0" date="23 Oct 2025, 16:11:22" time="20 seconds" ops="18 operations" credits="18 credits" size="195.0 KB" />
      <EditedRow className="mt-[64px] shrink-0" />
      <Run className="mt-[52px] shrink-0" date="23 Oct 2025, 16:01:45" time="28 seconds" ops="19 operations" />
    </section>
  );
}

export default function App() {
  return (
    <div className="flex h-[1836px] w-[2940px] flex-col overflow-hidden bg-white font-[Inter,sans-serif]">
      <TitleBar />
      <div className="flex h-[1760px]">
        <Sidebar />
        <main className="flex h-full flex-1 flex-col bg-[#f8f8f8]">
          <Header />
          <div className="flex h-[1562px]">
            <div className="flex w-[2012px] shrink-0 flex-col">
              <Diagram />
              <Chart />
            </div>
            <div className="mt-[60px] h-[1408px] w-[2px] shrink-0 bg-[#e1e3e4]" />
            <SidePanel />
            <div className="ml-auto mt-[60px] flex w-[30px] shrink-0 justify-center border-x-2 border-[#e8e8e8] bg-[#fafafa] pt-[6px]">
              <div className="h-[376px] w-[15px] rounded-full bg-[#c1c1c1]" />
            </div>
          </div>
        </main>
      </div>
    </div>
  );
}
